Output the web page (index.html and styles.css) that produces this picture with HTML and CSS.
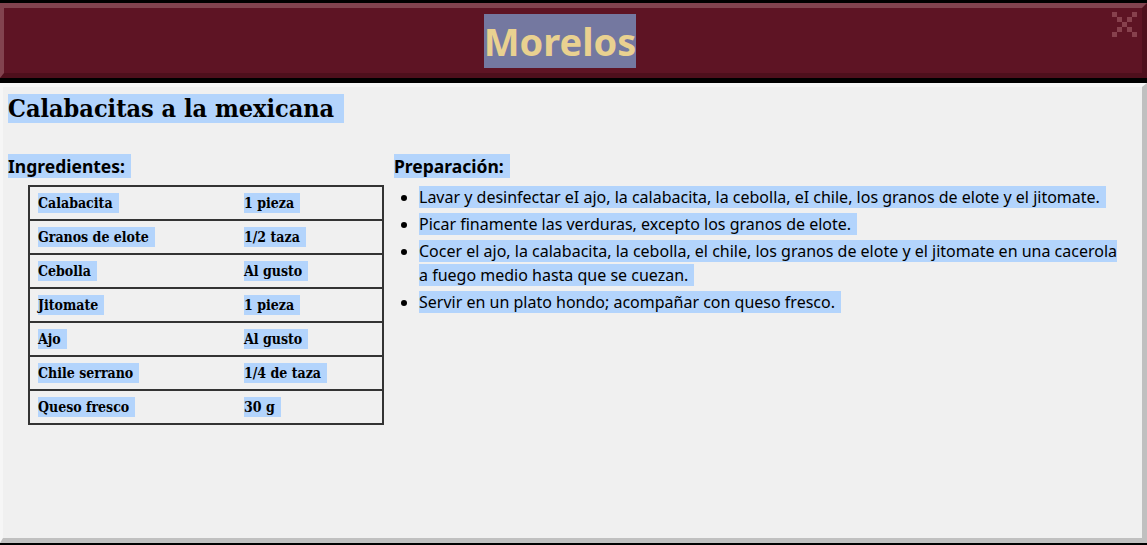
FILE: index.html
```html
<!DOCTYPE html>
<html lang="es">
<head>
    <meta charset="UTF-8">
    <title>Morelos</title>
    <link rel="stylesheet" href="styles.css">
</head>
<body>
    <div class="window">
        <div class="titlebar-frame">
            <div class="titlebar">
                <h1 class="title"><span class="sel-dark">Morelos</span></h1>
                <svg class="close" width="25" height="25" viewBox="0 0 5 5">
                    <rect x="0" y="0" width="1" height="1"/>
                    <rect x="4" y="0" width="1" height="1"/>
                    <rect x="1" y="1" width="1" height="1"/>
                    <rect x="3" y="1" width="1" height="1"/>
                    <rect x="2" y="2" width="1" height="1"/>
                    <rect x="1" y="3" width="1" height="1"/>
                    <rect x="3" y="3" width="1" height="1"/>
                    <rect x="0" y="4" width="1" height="1"/>
                    <rect x="4" y="4" width="1" height="1"/>
                </svg>
            </div>
        </div>
        <div class="content">
            <h2 class="recipe-name"><span class="sel">Calabacitas a la mexicana</span></h2>
            <div class="columns">
                <div class="ingredients">
                    <h3 class="section-title"><span class="sel">Ingredientes:</span></h3>
                    <table class="ingredient-table">
                        <tr><td><span class="sel">Calabacita</span></td><td><span class="sel">1 pieza</span></td></tr>
                        <tr><td><span class="sel">Granos de elote</span></td><td><span class="sel">1/2 taza</span></td></tr>
                        <tr><td><span class="sel">Cebolla</span></td><td><span class="sel">Al gusto</span></td></tr>
                        <tr><td><span class="sel">Jitomate</span></td><td><span class="sel">1 pieza</span></td></tr>
                        <tr><td><span class="sel">Ajo</span></td><td><span class="sel">Al gusto</span></td></tr>
                        <tr><td><span class="sel">Chile serrano</span></td><td><span class="sel">1/4 de taza</span></td></tr>
                        <tr><td><span class="sel">Queso fresco</span></td><td><span class="sel">30 g</span></td></tr>
                    </table>
                </div>
                <div class="steps">
                    <h3 class="section-title"><span class="sel">Preparación:</span></h3>
                    <ul class="step-list">
                        <li><span class="sel">Lavar y desinfectar eI ajo, la calabacita, la cebolla, eI chile, los granos de elote y el jitomate.</span></li>
                        <li><span class="sel">Picar finamente las verduras, excepto los granos de elote.</span></li>
                        <li><span class="sel">Cocer el ajo, la calabacita, la cebolla, el chile, los granos de elote y el jitomate en una cacerola a fuego medio hasta que se cuezan.</span></li>
                        <li><span class="sel">Servir en un plato hondo; acompañar con queso fresco.</span></li>
                    </ul>
                </div>
            </div>
        </div>
    </div>
</body>
</html>
```

FILE: styles.css
```css
/* Global */
* {
    box-sizing: border-box;
    margin: 0;
    padding: 0;
}

body {
    background-color: #000;
    font-family: "Noto Sans", sans-serif;
    color: #000;
}

/* Window frame */
.window {
    width: 1147px;
    height: 545px;
    display: flex;
    flex-direction: column;
    border-bottom: 2px solid #000;
}

/* Title bar */
.titlebar-frame {
    border-top: 3px solid #000;
    border-bottom: 5px solid #000;
}

.titlebar {
    position: relative;
    height: 75px;
    display: flex;
    justify-content: center;
    align-items: center;
    padding-right: 26px;
    background-color: #5e1424;
    border-top: 5px solid #82434f;
    border-left: 4px solid #82434f;
    border-bottom: 5px solid #4e0f1c;
    border-right: 5px solid #4e0f1c;
}

.title {
    font-size: 38px;
    font-weight: bold;
    line-height: 54px;
    color: #e9d190;
}

.sel-dark {
    background-color: #7478a0;
    display: inline-block;
}

.close {
    position: absolute;
    top: 4px;
    right: 5px;
    fill: #87414d;
}

/* Content */
.content {
    flex: 1;
    background-color: #f0f0f0;
    border-top: 4px solid #f6f6f6;
    border-left: 3px solid #f6f6f6;
    border-right: 5px solid #c0c0c0;
    border-bottom: 5px solid #c0c0c0;
    padding: 7px 5px;
}

.sel {
    background-color: #b3d4fc;
    padding-right: 6px;
}

.recipe-name {
    font-family: "DejaVu Serif Condensed", "DejaVu Serif", serif;
    font-size: 25px;
    font-weight: bold;
    line-height: 30px;
    margin-bottom: 30px;
}

.recipe-name .sel {
    padding: 0 10px 0 0;
}

.columns {
    display: grid;
    grid-template-columns: 378px 1fr;
    gap: 8px;
}

.section-title {
    font-size: 17.5px;
    font-weight: bold;
    line-height: 24px;
    margin-bottom: 7px;
}

/* Ingredient table */
.ingredient-table {
    margin-left: 20px;
    width: 356px;
    border-collapse: collapse;
    font-family: "DejaVu Serif Condensed", "DejaVu Serif", serif;
    font-size: 14px;
    font-weight: bold;
}

.ingredient-table tr {
    border: 2px solid #333;
}

.ingredient-table td {
    height: 34px;
    padding: 0 8px;
    vertical-align: middle;
}

.ingredient-table td:first-child {
    width: 207px;
}

.ingredient-table .sel {
    padding: 2px 6px 2px 0;
}

/* Steps */
.step-list {
    padding-left: 25px;
    padding-right: 8px;
    font-size: 16px;
    line-height: 24px;
}

.step-list li {
    margin-bottom: 3px;
}
```
